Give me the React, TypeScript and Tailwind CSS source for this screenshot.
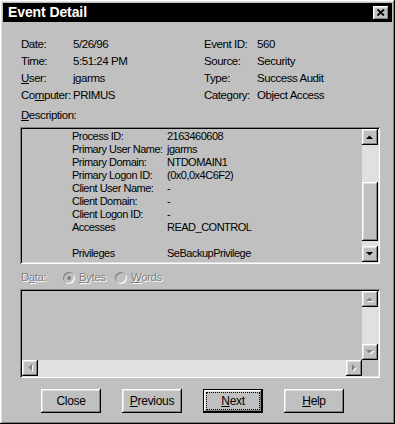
import type { ReactNode } from 'react'

const RAISED =
  'shadow-[inset_-1px_-1px_0_#000,inset_1px_1px_0_#fff,inset_-2px_-2px_0_#808080,inset_2px_2px_0_#dfdfdf]'
const SUNKEN =
  'shadow-[inset_1px_1px_0_#808080,inset_-1px_-1px_0_#fff,inset_2px_2px_0_#000,inset_-2px_-2px_0_#dfdfdf]'

const FIELDS_LEFT = [
  { label: 'Date:', value: '5/26/96' },
  { label: 'Time:', value: '5:51:24 PM' },
  { label: <><u>U</u>ser:</>, value: 'jgarms' },
  { label: <>Co<u>m</u>puter:</>, value: 'PRIMUS' },
]

const FIELDS_RIGHT = [
  { label: 'Event ID:', value: '560' },
  { label: 'Source:', value: 'Security' },
  { label: 'Type:', value: 'Success Audit' },
  { label: 'Category:', value: 'Object Access' },
]

const DESCRIPTION = [
  ['Process ID:', '2163460608'],
  ['Primary User Name:', 'jgarms'],
  ['Primary Domain:', 'NTDOMAIN1'],
  ['Primary Logon ID:', '(0x0,0x4C6F2)'],
  ['Client User Name:', '-'],
  ['Client Domain:', '-'],
  ['Client Logon ID:', '-'],
  ['Accesses', 'READ_CONTROL'],
  ['', ''],
  ['Privileges', 'SeBackupPrivilege'],
]

type Dir = 'up' | 'down' | 'left' | 'right'

function Arrow({ dir, disabled }: { dir: Dir; disabled?: boolean }) {
  const pts: Record<Dir, string> = {
    up: '0,4 7,4 3.5,0.5',
    down: '0,0 7,0 3.5,3.5',
    left: '4,0 4,7 0.5,3.5',
    right: '0,0 0,7 3.5,3.5',
  }
  const horiz = dir === 'left' || dir === 'right'
  return (
    <svg width={horiz ? 5 : 8} height={horiz ? 8 : 5} viewBox={horiz ? '0 0 5 8' : '0 0 8 5'}>
      {disabled && <polygon points={pts[dir]} fill="#fff" transform="translate(1,1)" />}
      <polygon points={pts[dir]} fill={disabled ? '#808080' : '#000'} />
    </svg>
  )
}

function ScrollButton({ dir, disabled }: { dir: Dir; disabled?: boolean }) {
  return (
    <div className={`w-4 h-4 shrink-0 bg-[#c0c0c0] flex items-center justify-center ${RAISED}`}>
      <Arrow dir={dir} disabled={disabled} />
    </div>
  )
}

function Button({ children, isDefault }: { children: ReactNode; isDefault?: boolean }) {
  if (isDefault) {
    return (
      <div className="w-[60px] h-6 border border-black bg-[#c0c0c0]">
        <div className={`w-full h-full p-[2px] ${RAISED}`}>
          <div className="w-full h-full border border-dotted border-black flex items-center justify-center">
            {children}
          </div>
        </div>
      </div>
    )
  }
  return (
    <div className={`w-[60px] h-6 bg-[#c0c0c0] flex items-center justify-center ${RAISED}`}>
      {children}
    </div>
  )
}

function Radio({ checked }: { checked?: boolean }) {
  return (
    <div className="w-3 h-3 rounded-full bg-[#c0c0c0] shadow-[inset_1px_1px_0_#808080,inset_-1px_-1px_0_#fff] flex items-center justify-center">
      {checked && <div className="w-1 h-1 rounded-full bg-[#808080]" />}
    </div>
  )
}

export default function App() {
  return (
    <div
      className={`w-[395px] h-[424px] bg-[#c0c0c0] p-[3px] flex flex-col text-[11.5px] tracking-[-0.45px] text-black font-['Liberation_Sans',Arial,sans-serif] ${RAISED}`}
    >
      <div className="h-[19px] bg-black flex items-center justify-between pl-[5px] pr-[3px]">
        <span className="text-white font-bold text-[14px] tracking-[-0.1px]">Event Detail</span>
        <div className={`w-4 h-[14px] bg-[#c0c0c0] flex items-center justify-center ${RAISED}`}>
          <svg width="8" height="7" viewBox="0 0 8 7">
            <path d="M0.5 0.5 L7 6.5 M7 0.5 L0.5 6.5" stroke="#000" strokeWidth="1.8" />
          </svg>
        </div>
      </div>

      <div className="pl-[18px] pr-[12px] flex flex-col">
        <div className="mt-[14px] flex">
          <div className="w-[183px] flex flex-col">
            {FIELDS_LEFT.map((f, i) => (
              <div key={i} className="h-[17px] flex items-center">
                <span className="w-[52px] whitespace-nowrap">{f.label}</span>
                <span>{f.value}</span>
              </div>
            ))}
          </div>
          <div className="flex flex-col">
            {FIELDS_RIGHT.map((f, i) => (
              <div key={i} className="h-[17px] flex items-center">
                <span className="w-[53px] whitespace-nowrap">{f.label}</span>
                <span>{f.value}</span>
              </div>
            ))}
          </div>
        </div>

        <div className="mt-[4px] h-[15px] flex items-center">
          <span>
            <u>D</u>escription:
          </span>
        </div>

        <div className={`mt-[4px] -ml-px w-[360px] h-[137px] p-[2px] flex ${SUNKEN}`}>
          <div className="flex-1 pl-[50px] pt-px flex flex-col text-[11px] tracking-[-0.5px]">
            {DESCRIPTION.map(([k, v], i) => (
              <div key={i} className="h-[13px] flex items-center">
                <span className="w-[95px] whitespace-nowrap">{k}</span>
                <span>{v}</span>
              </div>
            ))}
          </div>
          <div className="w-4 flex flex-col">
            <ScrollButton dir="up" />
            <div className="h-[37px] bg-[#e0e0e0]" />
            <div className={`h-[59px] bg-[#c0c0c0] ${RAISED}`} />
            <div className="flex-1 bg-[#e0e0e0]" />
            <ScrollButton dir="down" />
          </div>
        </div>

        <div className="mt-[6px] h-[15px] flex items-center text-[#808080] [text-shadow:1px_1px_0_#fff]">
          <span className="w-[42px]">
            D<u>a</u>ta:
          </span>
          <Radio checked />
          <span className="ml-[4px] w-[36px]">
            <u>B</u>ytes
          </span>
          <Radio />
          <span className="ml-[4px]">
            <u>W</u>ords
          </span>
        </div>

        <div className={`mt-[4px] -ml-px w-[360px] h-[89px] p-[2px] flex flex-col ${SUNKEN}`}>
          <div className="flex-1 flex">
            <div className="flex-1" />
            <div className="w-4 flex flex-col">
              <ScrollButton dir="up" disabled />
              <div className="flex-1 bg-[#e0e0e0]" />
              <ScrollButton dir="down" disabled />
            </div>
          </div>
          <div className="h-4 flex">
            <ScrollButton dir="left" disabled />
            <div className="flex-1 bg-[#e0e0e0]" />
            <ScrollButton dir="right" disabled />
            <div className="w-4 bg-[#c0c0c0]" />
          </div>
        </div>

        <div className="mt-[11px] pl-[20px] flex gap-[21px] text-[12px] tracking-[-0.3px]">
          <Button>Close</Button>
          <Button>
            <span>
              <u>P</u>revious
            </span>
          </Button>
          <Button isDefault>
            <span>
              <u>N</u>ext
            </span>
          </Button>
          <Button>
            <span>
              <u>H</u>elp
            </span>
          </Button>
        </div>
      </div>
    </div>
  )
}
